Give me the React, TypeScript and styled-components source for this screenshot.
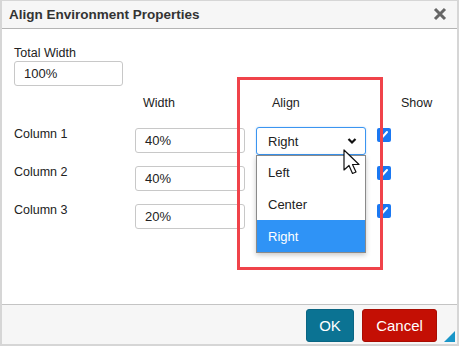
import { Fragment } from "react";
import styled, { createGlobalStyle } from "styled-components";

const GlobalStyle = createGlobalStyle`
  html, body {
    margin: 0;
    padding: 0;
    background: #fff;
  }
  * {
    box-sizing: border-box;
  }
`;

const Dialog = styled.div`
  position: relative;
  width: 459px;
  height: 346px;
  border: 2px solid #d6d6d6;
  border-top-width: 1px;
  display: flex;
  flex-direction: column;
  font-family: "Liberation Sans", Arial, sans-serif;
  color: #222;
  background: #fff;
`;

const TitleBar = styled.div`
  height: 28px;
  flex: none;
  background: #f6f6f6;
  border-bottom: 1px solid #b4b4b4;
  display: flex;
  align-items: center;
  justify-content: space-between;
  padding: 0 10px 1px 7px;
`;

const Title = styled.span`
  font-size: 13.5px;
  font-weight: 700;
  color: #333;
`;

const CloseButton = styled.span`
  display: flex;
  width: 14px;
  height: 14px;
`;

const Body = styled.div`
  flex: 1;
  padding: 17px 12px 0 12px;
`;

const FieldLabel = styled.div`
  font-size: 12.5px;
  line-height: 15px;
`;

const TextInput = styled.div<{ $w?: number }>`
  width: ${(p) => p.$w ?? 110}px;
  height: 25px;
  border: 1px solid #c8c8c8;
  border-radius: 3px;
  padding-left: 9px;
  font-size: 13px;
  display: flex;
  align-items: center;
  background: #fff;
`;

const Table = styled.div`
  display: grid;
  grid-template-columns: 110px 110px 110px 60px;
  grid-template-rows: 31px 38px 38px 38px;
  column-gap: 11px;
  margin-top: 10px;
  align-items: start;
`;

const Header = styled.div<{ $pad: number }>`
  font-size: 12.5px;
  line-height: 15px;
  padding-left: ${(p) => p.$pad}px;
`;

const RowLabel = styled.div`
  font-size: 12.5px;
  line-height: 15px;
`;

const Cell = styled.div`
  margin-top: 1px;
`;

const SelectWrap = styled.div`
  position: relative;
`;

const Select = styled.div`
  width: 110px;
  height: 28px;
  border: 1px solid #3b95f0;
  border-radius: 3px;
  padding: 0 8px 0 11px;
  display: flex;
  align-items: center;
  justify-content: space-between;
  font-size: 13px;
  background: #fff;
  box-shadow: 0 0 2px rgba(59, 149, 240, 0.35);
`;

const Menu = styled.div`
  position: absolute;
  top: 28px;
  left: 0;
  width: 110px;
  border: 1px solid #8a8a8a;
  background: #fff;
  box-shadow: 0 2px 5px rgba(0, 0, 0, 0.22);
  z-index: 2;
`;

const MenuItem = styled.div<{ $active?: boolean }>`
  height: 32px;
  padding-left: 11px;
  display: flex;
  align-items: center;
  font-size: 13px;
  background: ${(p) => (p.$active ? "#2f93f6" : "#fff")};
  color: ${(p) => (p.$active ? "#fff" : "#222")};
`;

const Check = styled.span`
  display: flex;
  width: 14px;
  height: 14px;
  margin-top: 1px;
  border-radius: 2px;
  background: #1a78f2;
  align-items: center;
  justify-content: center;
`;

const Footer = styled.div`
  position: relative;
  height: 40px;
  flex: none;
  background: #f6f6f6;
  border-top: 1px solid #c4c4c4;
  display: flex;
  justify-content: flex-end;
  align-items: flex-start;
  gap: 8px;
  padding: 4px 20px 0 0;
`;

const Button = styled.button<{ $bg: string; $border: string; $w: number }>`
  width: ${(p) => p.$w}px;
  height: 33px;
  padding: 0;
  border: 1px solid ${(p) => p.$border};
  border-radius: 3px;
  background: ${(p) => p.$bg};
  color: #fff;
  font-family: "Liberation Sans", Arial, sans-serif;
  font-size: 15px;
`;

const Resize = styled.span`
  position: absolute;
  right: 2px;
  bottom: 2px;
  width: 0;
  height: 0;
  border-left: 11px solid transparent;
  border-bottom: 11px solid #1a96c8;
`;

const Highlight = styled.div`
  position: absolute;
  left: 235px;
  top: 76px;
  width: 146px;
  height: 193px;
  border: 3px solid #f0434a;
  pointer-events: none;
  z-index: 3;
`;

const Cursor = styled.svg`
  position: absolute;
  left: 341px;
  top: 148px;
  z-index: 4;
`;

const rows = [
  { name: "Column 1", width: "40%" },
  { name: "Column 2", width: "40%" },
  { name: "Column 3", width: "20%" },
];

function CheckMark() {
  return (
    <svg width="10" height="10" viewBox="0 0 10 10">
      <path d="M3 7.5 L8 2" stroke="#fff" strokeWidth="2" strokeLinecap="round" />
      <path d="M2 6 L3 7.5" stroke="#fff" strokeWidth="1.6" strokeLinecap="round" />
    </svg>
  );
}

export default function App() {
  return (
    <>
      <GlobalStyle />
      <Dialog>
        <TitleBar>
          <Title>Align Environment Properties</Title>
          <CloseButton>
            <svg width="14" height="14" viewBox="0 0 14 14">
              <path d="M2 2 L12 12 M12 2 L2 12" stroke="#666" strokeWidth="3" />
            </svg>
          </CloseButton>
        </TitleBar>
        <Body>
          <FieldLabel>Total Width</FieldLabel>
          <TextInput $w={109}>100%</TextInput>
          <Table>
            <span />
            <Header $pad={8}>Width</Header>
            <Header $pad={16}>Align</Header>
            <Header $pad={24}>Show</Header>
            {rows.map((r, i) => (
              <Fragment key={r.name}>
                <RowLabel>{r.name}</RowLabel>
                <Cell>
                  <TextInput>{r.width}</TextInput>
                </Cell>
                {i === 0 ? (
                  <SelectWrap>
                    <Select>
                      Right
                      <svg width="10" height="8" viewBox="0 0 10 8">
                        <path d="M1.5 2 L5 5.5 L8.5 2" stroke="#111" strokeWidth="2.2" fill="none" />
                      </svg>
                    </Select>
                    <Menu>
                      <MenuItem>Left</MenuItem>
                      <MenuItem>Center</MenuItem>
                      <MenuItem $active>Right</MenuItem>
                    </Menu>
                  </SelectWrap>
                ) : (
                  <span />
                )}
                <Check>
                  <CheckMark />
                </Check>
              </Fragment>
            ))}
          </Table>
        </Body>
        <Footer>
          <Button $bg="#0b7393" $border="#0a6583" $w={48}>OK</Button>
          <Button $bg="#c40f04" $border="#a80d03" $w={75}>Cancel</Button>
          <Resize />
        </Footer>
        <Highlight />
        <Cursor width="20" height="30" viewBox="0 0 20 30">
          <path
            d="M1 1 L1 21 L6 16.5 L9.5 24.5 L13 23 L9.5 15.5 L16 15.5 Z"
            fill="#fff"
            stroke="#111"
            strokeWidth="1.2"
            strokeLinejoin="round"
          />
        </Cursor>
      </Dialog>
    </>
  );
}
